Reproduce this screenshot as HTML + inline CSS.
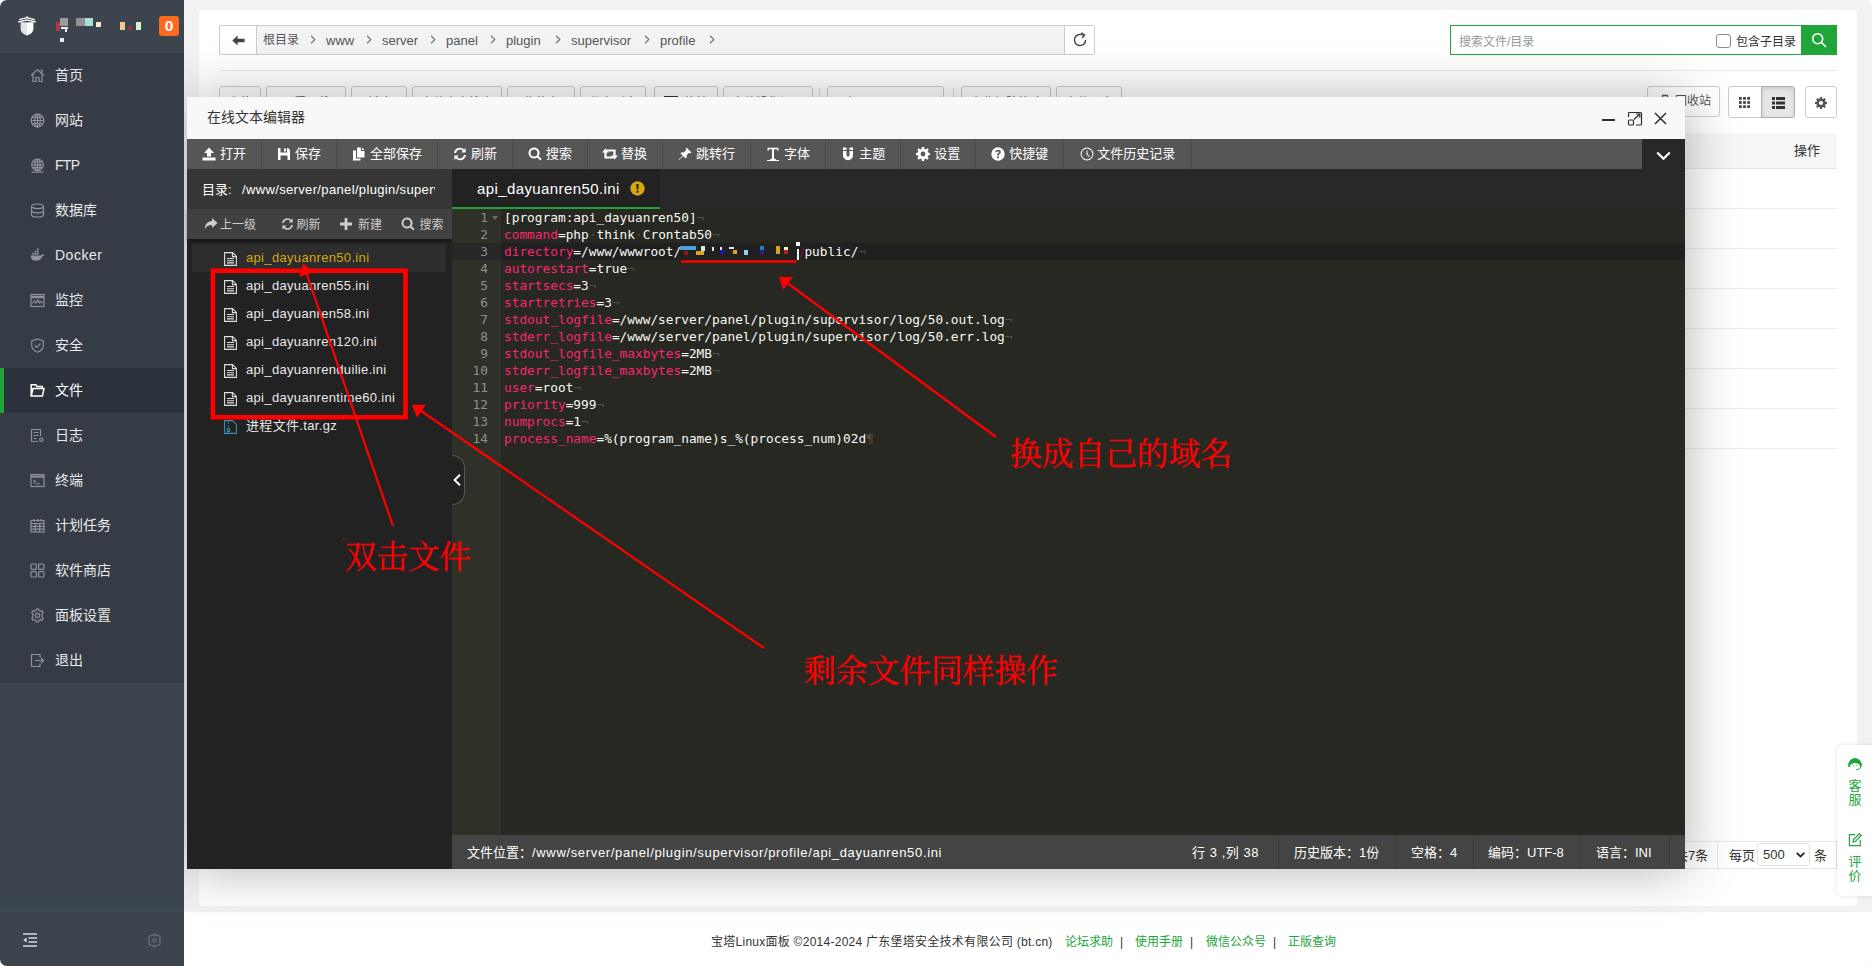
<!DOCTYPE html>
<html lang="zh-CN">
<head>
<meta charset="utf-8">
<title>宝塔Linux面板</title>
<style>
*{box-sizing:border-box;margin:0;padding:0}
html,body{width:1872px;height:966px;overflow:hidden;background:#fff}
body{font-family:"Liberation Sans","Noto Sans CJK SC",sans-serif;font-size:12px;color:#333;position:relative}
.abs{position:absolute}
svg{display:block}
/* ---------- sidebar ---------- */
#side{position:absolute;left:0;top:0;width:184px;height:966px;background:#3c444d;border-radius:7px 0 0 7px;overflow:hidden}
#side .menu{position:absolute;left:0;top:53px;width:184px;height:630px;background:#353c46}
#side .it{position:relative;height:45px;line-height:44px;color:#e9e9e9;font-size:14px;padding-left:55px;white-space:nowrap}
#side .it svg{position:absolute;left:30px;top:15px;width:15px;height:15px;fill:none;stroke:#8d9399;stroke-width:1.2}
#side .it.on{background:#2c323c;color:#fff}
#side .it.on svg{stroke:#fff;stroke-width:1.5}
#side .it.on:before{content:"";position:absolute;left:0;top:0;width:4px;height:45px;background:#20a53a}
#side .sep{position:absolute;left:0;top:911px;width:184px;height:1px;background:#424c58}
#side .badge{position:absolute;left:159px;top:16px;width:20px;height:20px;border-radius:3px;background:#fb6a1f;color:#fff;font-weight:bold;font-size:15.5px;line-height:20px;text-align:center}
#side .mos i{position:absolute;display:block}
/* ---------- main ---------- */
#main{position:absolute;left:184px;top:0;width:1688px;height:966px;background:#f2f2f2;overflow:hidden;border-radius:0 7px 7px 0}
#card{position:absolute;left:15px;top:10px;width:1658px;height:896px;background:#fff;border-radius:4px}
#foot{position:absolute;left:0;top:912px;width:1688px;height:54px;background:#fff;font-size:12px;color:#333;white-space:nowrap}
#foot span{position:absolute;top:22px;line-height:16px}
#foot .g{color:#20a53a}
/* main content (coordinates relative to #main: page x - 184) */
#main .bc{position:absolute;left:35px;top:25px;width:876px;height:30px;border:1px solid #ccc;border-radius:2px;background:#f3f3f3}
#main .bc .back{position:absolute;left:0;top:0;width:37px;height:28px;background:#fff;border-right:1px solid #ccc}
#main .bc .ref{position:absolute;right:0;top:0;width:30px;height:28px;background:#fff;border-left:1px solid #ccc}
#main .bc .p{position:absolute;top:0;line-height:29px;font-size:13px;color:#555;white-space:nowrap}
#main .bc .p.a{color:#888;font-size:12px}
#main .srch{position:absolute;left:1266px;top:25px;width:387px;height:30px;border:1px solid #20a53a;background:#fff}
#main .srch .ph{position:absolute;left:8px;top:0;line-height:32px;font-size:12px;color:#999}
#main .srch .cb{position:absolute;left:265px;top:7.5px;width:14.5px;height:14.5px;border:1px solid #8c8c8c;border-radius:3px;background:#fff}
#main .srch .lb{position:absolute;left:285px;top:0;line-height:32px;font-size:12px;color:#333}
#main .srch .go{position:absolute;right:-1px;top:-1px;width:36px;height:30px;background:#20a53a}
#main .hr{position:absolute;left:35px;top:70px;width:1618px;height:1px;background:#eaeaea}
#main .tb{position:absolute;top:86px;height:31px;border:1px solid #ccc;border-radius:3px;background:#fff}
#main .th{position:absolute;left:35px;top:133px;width:1618px;height:36px;background:#f6f6f6;border-bottom:1px solid #e6e6e6}
#main .th span{position:absolute;left:1575px;top:0;line-height:35px;font-size:13px;color:#333}
#main .rl{position:absolute;left:35px;width:1618px;height:1px;background:#ececec}
#main .pg{position:absolute;top:841px;height:28px;border:1px solid #e6e6e6;background:#fff;font-size:13px;color:#333}
#fl{position:absolute;left:1653px;top:745px;width:40px;height:151px;background:#fff;border-radius:6px;box-shadow:0 0 4px rgba(0,0,0,.12);color:#20a53a;font-size:13px;line-height:14px}
#fl span{position:absolute;left:11px;width:14px;text-align:center}
/* ---------- modal (inside #main; page x-184) ---------- */
#dlg{position:absolute;left:3px;top:97px;width:1498px;height:772px;background:#222;box-shadow:1px 1px 50px rgba(0,0,0,.3)}
#dlg .tt{position:absolute;left:0;top:0;width:1498px;height:42px;background:#f8f8f8;font-size:14px;color:#333;line-height:40px;padding-left:20px}
#dlg .bar{position:absolute;left:0;top:42px;width:1498px;height:30px;background:#565656;white-space:nowrap;font-size:0}
#dlg .bar .b{display:inline-block;vertical-align:top;height:30px;line-height:29px;padding:0 15px 0 33px;border-right:1px solid #4a4a4a;font-size:13px;color:#fff;position:relative}
#dlg .bar .b svg{position:absolute;left:15px;top:8px;width:14px;height:14px;fill:#fff}
#dlg .bar .dd{position:absolute;right:0;top:0;width:43px;height:30px;background:#282828}
#dlg .lp{position:absolute;left:0;top:72px;width:265px;height:700px;background:#222}
#dlg .lp .dir{position:absolute;left:0;top:0;width:265px;height:40px;background:#363636;color:#fff;font-size:12px;line-height:42px;white-space:nowrap;overflow:hidden}
#dlg .lp .ops{position:absolute;left:0;top:40px;width:265px;height:30px;background:#414141;color:#cdcdcd;font-size:12px;line-height:32px;box-shadow:0 2px 3px rgba(0,0,0,.35)}
#dlg .lp .ops span{position:absolute;top:0;white-space:nowrap}
#dlg .lp .ops svg{position:absolute;top:8px;fill:#cdcdcd}
#dlg .f{position:absolute;left:5px;width:254px;height:28px;line-height:28px;font-size:13px;color:#e8e8e8;padding-left:54px;white-space:nowrap;letter-spacing:0.33px}
#dlg .f.on{background:#2d2d2d;color:#d4a80e}
#dlg .f svg{position:absolute;left:32px;top:8px}
#dlg .tabs{position:absolute;left:265px;top:72px;width:1233px;height:40px;background:#282828}
#dlg .tab{position:absolute;left:0;top:0;width:208px;height:40px;background:#222;border-bottom:2px solid #20a53a;color:#fff;font-size:15px;line-height:39px;padding-left:25px;white-space:nowrap;letter-spacing:0.4px}
#dlg .ed{position:absolute;left:265px;top:112px;width:1233px;height:626px;background:#272822;overflow:hidden}
#dlg .gut{position:absolute;left:0;top:0;width:49px;height:626px;background:#2f3129}
#dlg .ln{position:absolute;left:0;width:1233px;height:17px;line-height:17px;font-family:"DejaVu Sans Mono","Liberation Mono",monospace;font-size:12.8px;color:#f8f8f2;white-space:pre}
#dlg .ln b{position:absolute;left:0;top:0;width:36px;text-align:right;font-weight:normal;color:#8f908a}
#dlg .ln s{position:absolute;left:52px;top:0;text-decoration:none}
#dlg .ln k{color:#f92672}
#dlg .ln u{text-decoration:none;color:#52524d}
#dlg .ln.act{background:#202020}
#dlg .ln.act:before{content:"";position:absolute;left:0;top:0;width:49px;height:17px;background:#272727}
#dlg .st{position:absolute;left:265px;top:738px;width:1233px;height:34px;background:#444;color:#fff;font-size:13px;line-height:33px;white-space:nowrap}
#dlg .st span{position:absolute;top:1px}
#dlg .st em{font-style:normal;letter-spacing:0.66px}
#dlg .st i{position:absolute;top:0;width:1px;height:34px;background:#393939}
#dlg .fold{position:absolute;left:265px;top:358px;width:13px;height:50px;background:#222;border:1px solid #585858;border-left:none;border-radius:0 13px 13px 0}
</style>
</head>
<body>
<div id="side">
  <!-- logo -->
  <svg class="abs" style="left:18px;top:16px" width="18" height="20" viewBox="0 0 18 20">
    <path d="M9 0.3 L9 2.2 M1.2 3.6 L9 1.7 L16.8 3.6 M0.3 6 L9 3.8 L17.7 6" stroke="#fff" stroke-width="1.3" fill="none"/>
    <path d="M2.6 6.2 H9 V19.5 C5.5 18.2 2.6 16.2 2.6 12.5 Z" fill="#e4e4e4"/>
    <path d="M9 6.2 H15.4 V12.5 C15.4 16.2 12.5 18.2 9 19.5 Z" fill="#fff"/>
  </svg>
  <div class="mos">
    <i style="left:56px;top:22px;width:4px;height:9px;background:#a83a45"></i>
    <i style="left:60px;top:18px;width:8px;height:8px;background:#9b9b9b"></i>
    <i style="left:76px;top:18px;width:9px;height:8px;background:#8f9396"></i>
    <i style="left:85px;top:18px;width:8px;height:8px;background:#a8e0cf"></i>
    <i style="left:96px;top:22px;width:5px;height:5px;background:#f3ecc3"></i>
    <i style="left:120px;top:22px;width:5px;height:8px;background:#f6c48f"></i>
    <i style="left:128px;top:26px;width:4px;height:4px;background:#8e3340"></i>
    <i style="left:136px;top:22px;width:5px;height:8px;background:#d9f0d0"></i>
    <i style="left:60px;top:38px;width:4px;height:4px;background:#e9edf0"></i>
    <i style="left:61px;top:27px;width:7px;height:2px;background:#f4f6fa"></i><i style="left:65px;top:27px;width:2px;height:5px;background:#e8ecf4"></i>
  </div>
  <div class="badge">0</div>
  <div class="menu">
    <div class="it"><svg viewBox="0 0 15 15"><path d="M1 7.5 L7.5 1.5 L14 7.5 M3 6 V13.5 H6 V9.5 H9 V13.5 H12 V6 M10.5 2 H12 V4.5"/></svg>首页</div>
    <div class="it"><svg viewBox="0 0 15 15"><circle cx="7.5" cy="7.5" r="6.3"/><ellipse cx="7.5" cy="7.5" rx="2.8" ry="6.3"/><path d="M7.5 1.2 V13.8 M1.2 7.5 H13.8 M2 4.5 H13 M2 10.5 H13"/></svg>网站</div>
    <div class="it"><svg viewBox="0 0 15 15"><circle cx="7.5" cy="6.8" r="5.8"/><ellipse cx="7.5" cy="6.8" rx="2.6" ry="5.8"/><path d="M7.5 1 V12.6 M1.7 6.8 H13.3 M2.4 4 H12.6 M2.4 9.6 H12.6 M1.5 14.2 H13.5"/></svg><span style="letter-spacing:-0.7px">FTP</span></div>
    <div class="it"><svg viewBox="0 0 15 15"><ellipse cx="7.5" cy="3.3" rx="6" ry="2.3"/><path d="M1.5 3.3 V11.7 C1.5 13 4.2 14 7.5 14 S13.5 13 13.5 11.7 V3.3 M1.5 7.5 C1.5 8.8 4.2 9.8 7.5 9.8 S13.5 8.8 13.5 7.5"/></svg>数据库</div>
    <div class="it"><svg viewBox="0 0 15 15" style="fill:#8d9399;stroke:none"><path d="M0.6 7.4 H11.2 C11.6 6.6 12.1 6.2 13 6.4 C13.6 6.5 14.2 6.8 14.5 7.2 C13.9 8 13.1 8.3 12.3 8.3 C11.3 11.3 9 12.8 5.6 12.8 C2.6 12.8 0.8 11 0.6 7.4 Z M2.2 5 H4 V6.8 H2.2 Z M4.5 5 H6.3 V6.8 H4.5 Z M6.8 5 H8.6 V6.8 H6.8 Z M4.5 2.7 H6.3 V4.5 H4.5 Z M6.8 2.7 H8.6 V4.5 H6.8 Z M6.8 0.6 H8.6 V2.3 H6.8 Z"/></svg><span style="letter-spacing:0.5px">Docker</span></div>
    <div class="it"><svg viewBox="0 0 15 15"><rect x="1" y="1.5" width="13" height="12"/><path d="M1 4 H14" stroke-width="2.4"/><path d="M2.5 10.5 L4.5 8 L6 10 L8 7 L9.5 10 L11 8.5 L12.5 10"/></svg>监控</div>
    <div class="it"><svg viewBox="0 0 15 15"><path d="M7.5 1 L13.3 3 V7.5 C13.3 10.8 10.8 13 7.5 14.2 C4.2 13 1.7 10.8 1.7 7.5 V3 Z M4.8 7.4 L6.8 9.4 L10.4 5.6"/></svg>安全</div>
    <div class="it on"><svg viewBox="0 0 15 15"><path d="M1.2 13 V1.8 H5.8 L7 3.6 H12.2 V5.6 M1.2 13 L3 5.6 H14 L12.4 13 Z"/></svg>文件</div>
    <div class="it"><svg viewBox="0 0 15 15"><path d="M10.5 8 V1.5 H1.5 V13.5 H8 M3.5 4.5 H8.5 M3.5 7.5 H8.5 M3.5 10.5 H6.5"/><circle cx="11.3" cy="11.8" r="1.7"/></svg>日志</div>
    <div class="it"><svg viewBox="0 0 15 15"><rect x="1" y="1.5" width="13" height="12"/><path d="M1 3.6 H14" stroke-width="2.2"/><path d="M3.5 7 L5.5 8.7 L3.5 10.4 M6.5 10.8 H9.5"/></svg>终端</div>
    <div class="it"><svg viewBox="0 0 15 15"><rect x="1" y="2.5" width="13" height="11.5"/><path d="M1 5.5 H14 M1 8.3 H14 M1 11.1 H14 M5.3 5.5 V14 M9.7 5.5 V14 M4 1 V3.5 M7.5 1 V3.5 M11 1 V3.5"/></svg>计划任务</div>
    <div class="it"><svg viewBox="0 0 15 15"><rect x="1" y="1" width="5.4" height="5.4" rx="1"/><rect x="8.6" y="1" width="5.4" height="5.4" rx="1"/><rect x="1" y="8.6" width="5.4" height="5.4" rx="1"/><rect x="8.6" y="8.6" width="5.4" height="5.4" rx="1"/></svg>软件商店</div>
    <div class="it"><svg viewBox="0 0 15 15"><circle cx="7.5" cy="7.5" r="2.1"/><path d="M6.4 1 H8.6 L9 2.7 L10.3 3.4 L12 2.8 L13.2 4.7 L12 6 V7.5 9 L13.2 10.3 L12 12.2 L10.3 11.6 L9 12.3 L8.6 14 H6.4 L6 12.3 L4.7 11.6 L3 12.2 L1.8 10.3 L3 9 V6 L1.8 4.7 L3 2.8 L4.7 3.4 L6 2.7 Z"/></svg>面板设置</div>
    <div class="it"><svg viewBox="0 0 15 15"><path d="M10 4.5 V1.5 H1.5 V13.5 H10 V10.5 M5 7.5 H13.5 M11 5 L13.5 7.5 L11 10"/></svg>退出</div>
  </div>
  <div class="sep"></div>
  <svg class="abs" style="left:23px;top:933px" width="15" height="14" viewBox="0 0 15 14"><path d="M0 1 H14 M5.5 5 H14 M5.5 9 H14 M0 13 H14" stroke="#d6d8da" stroke-width="1.5" fill="none"/><path d="M3.6 4.4 V9.6 L0.2 7 Z" fill="#d6d8da"/></svg>
  <svg class="abs" style="left:146.5px;top:932.5px" width="15" height="15" viewBox="0 0 15 15" fill="none" stroke="#6d757e" stroke-width="1.1" stroke-linejoin="round"><circle cx="7.5" cy="7.5" r="1.8"/><path d="M7.5 0.9 Q8.6 2.6 10.3 2.7 Q12.4 2.4 13.2 4.2 Q12.3 6 13.1 7.5 Q12.3 9 13.2 10.8 Q12.4 12.6 10.3 12.3 Q8.6 12.4 7.5 14.1 Q6.4 12.4 4.7 12.3 Q2.6 12.6 1.8 10.8 Q2.7 9 1.9 7.5 Q2.7 6 1.8 4.2 Q2.6 2.4 4.7 2.7 Q6.4 2.6 7.5 0.9 Z"/></svg>
</div>
<div id="main">
  <div id="card"></div>
  <div class="bc">
    <div class="back"><svg class="abs" style="left:12px;top:9px" width="13" height="11" viewBox="0 0 13 11"><path d="M0.3 5.5 L5.6 0.6 V3.7 H12.6 V7.3 H5.6 V10.4 Z" fill="#444"/></svg></div>
    <span class="p" style="left:43px;font-size:12px">根目录</span><svg class="abs" style="left:89.5px;top:9px" width="6" height="9" viewBox="0 0 6 9" fill="none" stroke="#777" stroke-width="1.2"><path d="M1 0.8 L4.8 4.5 L1 8.2"/></svg>
    <span class="p" style="left:106px">www</span><svg class="abs" style="left:146.0px;top:9px" width="6" height="9" viewBox="0 0 6 9" fill="none" stroke="#777" stroke-width="1.2"><path d="M1 0.8 L4.8 4.5 L1 8.2"/></svg>
    <span class="p" style="left:162px">server</span><svg class="abs" style="left:210.0px;top:9px" width="6" height="9" viewBox="0 0 6 9" fill="none" stroke="#777" stroke-width="1.2"><path d="M1 0.8 L4.8 4.5 L1 8.2"/></svg>
    <span class="p" style="left:226px">panel</span><svg class="abs" style="left:270.0px;top:9px" width="6" height="9" viewBox="0 0 6 9" fill="none" stroke="#777" stroke-width="1.2"><path d="M1 0.8 L4.8 4.5 L1 8.2"/></svg>
    <span class="p" style="left:286px">plugin</span><svg class="abs" style="left:334.5px;top:9px" width="6" height="9" viewBox="0 0 6 9" fill="none" stroke="#777" stroke-width="1.2"><path d="M1 0.8 L4.8 4.5 L1 8.2"/></svg>
    <span class="p" style="left:351px">supervisor</span><svg class="abs" style="left:424.0px;top:9px" width="6" height="9" viewBox="0 0 6 9" fill="none" stroke="#777" stroke-width="1.2"><path d="M1 0.8 L4.8 4.5 L1 8.2"/></svg>
    <span class="p" style="left:440px">profile</span><svg class="abs" style="left:489.0px;top:9px" width="6" height="9" viewBox="0 0 6 9" fill="none" stroke="#777" stroke-width="1.2"><path d="M1 0.8 L4.8 4.5 L1 8.2"/></svg>
    <div class="ref"><svg class="abs" style="left:7px;top:6px" width="16" height="16" viewBox="0 0 16 16" fill="none" stroke="#444" stroke-width="1.4"><path d="M13.6 8 A5.6 5.6 0 1 1 10.8 3.15"/><path d="M9.3 0.8 L12.6 3 L10.2 6" stroke-linejoin="miter"/></svg></div>
  </div>
  <div class="srch">
    <span class="ph">搜索文件/目录</span>
    <div class="cb"></div><span class="lb">包含子目录</span>
    <div class="go"><svg class="abs" style="left:10px;top:7px" width="16" height="16" viewBox="0 0 16 16" fill="none" stroke="#fff" stroke-width="1.6"><circle cx="6.7" cy="6.7" r="5"/><path d="M10.4 10.4 L15 15"/></svg></div>
  </div>
  <div class="hr"></div>
  <!-- file toolbar (mostly hidden by dialog) -->
  <div class="tb" style="left:35px;width:42px"><span style="display:block;text-align:center;line-height:33px;white-space:nowrap;color:#555">上传</span></div>
  <div class="tb" style="left:82px;width:80px"><span style="display:block;text-align:center;line-height:33px;white-space:nowrap;color:#555">远程下载</span></div>
  <div class="tb" style="left:167px;width:56px"><span style="display:block;text-align:center;line-height:33px;white-space:nowrap;color:#555">新建</span></div>
  <div class="tb" style="left:228px;width:90px"><span style="display:block;text-align:center;line-height:33px;white-space:nowrap;color:#555">文件内容搜索</span></div>
  <div class="tb" style="left:323px;width:68px"><span style="display:block;text-align:center;line-height:33px;white-space:nowrap;color:#555">收藏夹</span></div>
  <div class="tb" style="left:396px;width:66px"><span style="display:block;text-align:center;line-height:33px;white-space:nowrap;color:#555">分享列表</span></div>
  <div class="tb" style="left:470px;width:64px"><svg class="abs" style="left:9px;top:9px" width="14" height="12" viewBox="0 0 14 12"><rect x="0" y="0" width="14" height="12" fill="#333"/></svg><span class="abs" style="left:29px;top:0;line-height:33px;white-space:nowrap;color:#555">终端</span></div>
  <div class="tb" style="left:539px;width:90px"><span style="display:block;text-align:center;line-height:33px;white-space:nowrap;color:#555">文件操作记录</span></div>
  <div class="tb" style="left:643px;width:117px"><span style="display:block;text-align:center;line-height:33px;white-space:nowrap;color:#555">/(根目录) 36.9GB</span></div>
  <div class="tb" style="left:777px;width:90px"><span style="display:block;text-align:center;line-height:33px;white-space:nowrap;color:#555">企业级防篡改</span></div>
  <div class="tb" style="left:872px;width:66px"><span style="display:block;text-align:center;line-height:33px;white-space:nowrap;color:#555">文件同步</span></div>
  <div class="abs" style="left:634.5px;top:88px;width:1px;height:26px;background:#ddd"></div><div class="abs" style="left:768.5px;top:88px;width:1px;height:26px;background:#ddd"></div>
  <div class="tb" style="left:1463px;width:73px;top:86px;height:31px"><span class="abs" style="left:27px;top:0;line-height:28px;font-size:12px;color:#555;white-space:nowrap">回收站</span>
    <svg class="abs" style="left:10px;top:7px" width="14" height="16" viewBox="0 0 14 16" fill="none" stroke="#555" stroke-width="1.3"><path d="M1 4 H13 M4.5 4 V1.5 H9.5 V4 M2.5 4 L3.2 15 H10.8 L11.5 4"/></svg></div>
  <div class="tb" style="left:1544px;width:34px;height:32px;border-radius:3px 0 0 3px"><svg class="abs" style="left:10px;top:10px" width="11" height="11" viewBox="0 0 12 12" fill="#444"><rect x="0" y="0" width="3" height="3"/><rect x="4.5" y="0" width="3" height="3"/><rect x="9" y="0" width="3" height="3"/><rect x="0" y="4.5" width="3" height="3"/><rect x="4.5" y="4.5" width="3" height="3"/><rect x="9" y="4.5" width="3" height="3"/><rect x="0" y="9" width="3" height="3"/><rect x="4.5" y="9" width="3" height="3"/><rect x="9" y="9" width="3" height="3"/></svg></div>
  <div class="tb" style="left:1577px;width:34px;height:32px;border-radius:0 3px 3px 0;background:#e6e6e6;border-color:#adadad;box-shadow:inset 0 2px 4px rgba(0,0,0,.12)"><svg class="abs" style="left:10px;top:10px" width="13" height="12" viewBox="0 0 13 12" fill="#333"><rect x="0" y="0" width="3" height="3"/><rect x="4" y="0" width="9" height="3"/><rect x="0" y="4.5" width="3" height="3"/><rect x="4" y="4.5" width="9" height="3"/><rect x="0" y="9" width="3" height="3"/><rect x="4" y="9" width="9" height="3"/></svg></div>
  <div class="tb" style="left:1621px;width:32px;height:32px"><svg class="abs" style="left:9px;top:10px" width="12" height="12" viewBox="0 0 14 14"><path fill="#555" fill-rule="evenodd" d="M5.9 0 H8.1 L8.5 1.9 L9.6 2.4 L11.2 1.3 L12.7 2.8 L11.6 4.4 L12.1 5.5 L14 5.9 V8.1 L12.1 8.5 L11.6 9.6 L12.7 11.2 L11.2 12.7 L9.6 11.6 L8.5 12.1 L8.1 14 H5.9 L5.5 12.1 L4.4 11.6 L2.8 12.7 L1.3 11.2 L2.4 9.6 L1.9 8.5 L0 8.1 V5.9 L1.9 5.5 L2.4 4.4 L1.3 2.8 L2.8 1.3 L4.4 2.4 L5.5 1.9 Z M7 4.6 A2.4 2.4 0 1 0 7 9.4 A2.4 2.4 0 1 0 7 4.6 Z"/></svg></div>
  <div class="th"><span>操作</span></div>
  <div class="rl" style="top:208px"></div><div class="rl" style="top:248px"></div><div class="rl" style="top:288px"></div>
  <div class="rl" style="top:328px"></div><div class="rl" style="top:368px"></div><div class="rl" style="top:408px"></div><div class="rl" style="top:448px"></div>
  <!-- pagination -->
  <div class="pg" style="left:1440px;width:94px"><span class="abs" style="left:50px;top:0;line-height:27px;white-space:nowrap">共7条</span></div>
  <div class="pg" style="left:1533px;width:120px">
    <span class="abs" style="left:11px;top:0;line-height:27px">每页</span>
    <div class="abs" style="left:39px;top:1px;width:53px;height:23px;border:1px solid #e2e2e2;border-radius:3px;background:#fff">
      <span class="abs" style="left:5px;top:0;line-height:22px;font-size:13px;color:#333">500</span>
      <svg class="abs" style="left:38px;top:8px" width="9" height="6" viewBox="0 0 9 6" fill="none" stroke="#222" stroke-width="1.8"><path d="M0.7 0.8 L4.5 4.6 L8.3 0.8"/></svg>
    </div>
    <span class="abs" style="left:96px;top:0;line-height:27px">条</span>
  </div>
  <div id="foot">
    <span style="left:527px;letter-spacing:0.26px">宝塔Linux面板 ©2014-2024 广东堡塔安全技术有限公司 (bt.cn)</span>
    <span class="g" style="left:881px">论坛求助</span><span style="left:936px">|</span>
    <span class="g" style="left:951px">使用手册</span><span style="left:1006px">|</span>
    <span class="g" style="left:1022px">微信公众号</span><span style="left:1089px">|</span>
    <span class="g" style="left:1104px">正版查询</span>
  </div>
  <div id="fl">
    <svg class="abs" style="left:11px;top:13px" width="14" height="13" viewBox="0 0 14 13"><path d="M1.2 6.5 V5.8 A5.8 5.2 0 0 1 12.8 5.8 V6.5" fill="#20a53a" stroke="#20a53a" stroke-width="1"/><rect x="0.2" y="5" width="2.2" height="4" rx="1" fill="#20a53a"/><rect x="11.6" y="5" width="2.2" height="4" rx="1" fill="#20a53a"/><path d="M3.2 6.2 Q7 3.8 10.8 6.2 V7.5 A3.8 3.8 0 0 1 3.2 7.5 Z" fill="#fff"/><path d="M12.6 8.8 Q12.4 11.6 8 11.8" stroke="#20a53a" fill="none" stroke-width="0.9"/><circle cx="5.6" cy="7.6" r=".5" fill="#20a53a"/><circle cx="8.4" cy="7.6" r=".5" fill="#20a53a"/></svg>
    <span style="top:34px">客</span><span style="top:48px">服</span>
    <svg class="abs" style="left:11px;top:88px" width="14" height="14" viewBox="0 0 14 14" fill="none" stroke="#20a53a" stroke-width="1.2"><path d="M12.3 6.8 V12.6 H1.4 V1.7 H7.2"/><path d="M5 9 L5.5 6.6 L11.4 0.8 L13.2 2.6 L7.4 8.5 Z"/></svg>
    <span style="top:110px">评</span><span style="top:124px">价</span>
  </div>
  <div id="dlg">
    <div class="tt">在线文本编辑器
      <svg class="abs" style="left:1415px;top:14px" width="66" height="16" viewBox="0 0 66 16" fill="none" stroke="#2e2e2e" stroke-width="1.6">
        <path d="M0 9 H13" stroke-width="2"/>
        <path d="M26.5 6 V2.5 Q26.5 1.5 27.5 1.5 H38.5 Q39.5 1.5 39.5 2.5 V13 Q39.5 14 38.5 14 H34" stroke-width="1.2"/><rect x="26.5" y="9" width="5" height="5" rx="1" stroke-width="1.2"/><path d="M32 8.5 L37.5 3.2 M34 3 H37.8 V6.8" stroke-width="1.2"/>
        <path d="M53 2 L64 13 M64 2 L53 13" stroke-width="1.5"/>
      </svg>
    </div>
    <div class="bar">
      <span class="b"><svg viewBox="0 0 14 14"><path d="M7 0.5 L12 6 H9 V9.5 H5 V6 H2 Z M0.5 10.5 H13.5 V13.5 H0.5 Z"/></svg>打开</span><span class="b"><svg viewBox="0 0 14 14"><path d="M1 1 H3.5 V5.5 H10 V1 H11 L13 3 V13 H1 Z M7 1.5 H9 V4.5 H7 Z M3.5 8.5 V13 H10.5 V8.5 Z" fill-rule="evenodd"/></svg>保存</span><span class="b"><svg viewBox="0 0 14 14"><path d="M5 0.5 H9 V4 H12.5 V10.5 H5 Z M10 0.5 L12.5 3 H10 Z M1 3.5 H4 V11.5 H8.5 V13.5 H1 Z"/></svg>全部保存</span><span class="b"><svg viewBox="0 0 14 14"><path d="M12.6 1 V5.4 H8.2 L9.9 3.7 A4.1 4.1 0 0 0 3 6 H1.1 A6 6 0 0 1 11.2 2.4 Z M1.4 13 V8.6 H5.8 L4.1 10.3 A4.1 4.1 0 0 0 11 8 H12.9 A6 6 0 0 1 2.8 11.6 Z"/></svg>刷新</span><span class="b"><svg viewBox="0 0 14 14"><path d="M6 0.5 A5.5 5.5 0 1 0 9.2 10.5 L12.2 13.5 L13.6 12.1 L10.6 9.1 A5.5 5.5 0 0 0 6 0.5 Z M6 2.5 A3.5 3.5 0 1 1 6 9.5 A3.5 3.5 0 1 1 6 2.5 Z" fill-rule="evenodd"/></svg>搜索</span><span class="b"><svg viewBox="0 0 16 14" style="width:16px;left:14px"><path d="M3.5 1.5 L7 5.5 H4.6 V9.4 H9.6 L11.4 11.6 H2.4 V5.5 H0 Z M12.5 12.5 L9 8.5 H11.4 V4.6 H6.4 L4.6 2.4 H13.6 V8.5 H16 Z"/></svg>替换</span><span class="b"><svg viewBox="0 0 14 14"><path d="M8.5 0.5 L13.5 5.5 L12.3 6.2 L11 5.8 L8.6 8.2 C9 9.6 8.6 10.8 7.8 11.6 L5.1 8.9 L1 13 L0.6 13 V12.6 L4.7 8.5 L2.4 6.2 C3.2 5.4 4.4 5 5.8 5.4 L8.2 3 L7.8 1.7 Z"/></svg>跳转行</span><span class="b"><svg viewBox="0 0 14 14"><path d="M1.5 0.8 H12.5 V3.8 H11.5 L11 2.3 H8 V11.5 L9.8 12 V13 H4.2 V12 L6 11.5 V2.3 H3 L2.5 3.8 H1.5 Z M1 13 H13 V13.9 H1 Z"/></svg>字体</span><span class="b"><svg viewBox="0 0 14 14"><path d="M2 0.5 H5.5 V3 H2 Z M8.5 0.5 H12 V3 H8.5 Z M2 4 H5.5 V8 A1.5 1.5 0 0 0 8.5 8 V4 H12 V8.2 A5 5 0 0 1 2 8.2 Z"/></svg>主题</span><span class="b"><svg viewBox="0 0 14 14"><path fill-rule="evenodd" d="M5.9 0 H8.1 L8.5 1.9 L9.6 2.4 L11.2 1.3 L12.7 2.8 L11.6 4.4 L12.1 5.5 L14 5.9 V8.1 L12.1 8.5 L11.6 9.6 L12.7 11.2 L11.2 12.7 L9.6 11.6 L8.5 12.1 L8.1 14 H5.9 L5.5 12.1 L4.4 11.6 L2.8 12.7 L1.3 11.2 L2.4 9.6 L1.9 8.5 L0 8.1 V5.9 L1.9 5.5 L2.4 4.4 L1.3 2.8 L2.8 1.3 L4.4 2.4 L5.5 1.9 Z M7 4.6 A2.4 2.4 0 1 0 7 9.4 A2.4 2.4 0 1 0 7 4.6 Z"/></svg>设置</span><span class="b"><svg viewBox="0 0 14 14"><path fill-rule="evenodd" d="M7 0.3 A6.7 6.7 0 1 0 7 13.7 A6.7 6.7 0 1 0 7 0.3 Z M6 9.5 H8 V11.3 H6 Z M4.3 5.2 C4.4 3.6 5.5 2.7 7.1 2.7 C8.7 2.7 9.8 3.6 9.8 4.9 C9.8 6 9.2 6.5 8.5 7 C8 7.4 7.9 7.7 7.9 8.5 H6.1 C6.1 7.3 6.4 6.8 7.1 6.3 C7.6 5.9 7.9 5.6 7.9 5.1 C7.9 4.6 7.6 4.3 7.1 4.3 C6.5 4.3 6.2 4.7 6.1 5.3 Z"/></svg>快捷键</span><span class="b" style="padding-left:33px;padding-right:15.5px"><svg viewBox="0 0 14 14" style="left:16px"><path fill-rule="evenodd" d="M7 0.6 A6.4 6.4 0 1 0 7 13.4 A6.4 6.4 0 1 0 7 0.6 Z M7 1.6 A5.4 5.4 0 1 1 7 12.4 A5.4 5.4 0 1 1 7 1.6 Z M6.5 3.5 H7.5 V7 L9.8 9.2 L9.1 9.9 L6.5 7.4 Z"/></svg>文件历史记录</span>
      <div class="dd"><svg class="abs" style="left:14px;top:12px" width="15" height="10" viewBox="0 0 15 10" fill="none" stroke="#fff" stroke-width="2.2"><path d="M1.2 1.5 L7.5 7.8 L13.8 1.5"/></svg></div>
    </div>
    <div class="lp">
      <div class="dir"><span class="abs" style="left:15px;font-size:13px">目录:</span><span class="abs" style="left:55px;font-size:13px;letter-spacing:0.35px">/www/server/panel/plugin/supervisor/profile</span><div class="abs" style="left:248px;top:0;width:17px;height:40px;background:#363636"></div></div>
      <div class="ops">
        <svg style="left:17px" width="14" height="14" viewBox="0 0 14 14"><path d="M8 1 L13.5 6 L8 11 V8 C4.5 8 2.2 9.2 0.8 12.4 C0.8 7.5 3.5 4.4 8 4 Z"/></svg><span style="left:33px">上一级</span>
        <svg style="left:94px" width="13" height="14" viewBox="0 0 14 14"><path d="M12.6 1 V5.4 H8.2 L9.9 3.7 A4.1 4.1 0 0 0 3 6 H1.1 A6 6 0 0 1 11.2 2.4 Z M1.4 13 V8.6 H5.8 L4.1 10.3 A4.1 4.1 0 0 0 11 8 H12.9 A6 6 0 0 1 2.8 11.6 Z"/></svg><span style="left:109.5px">刷新</span>
        <svg style="left:153px;top:9px" width="12" height="12" viewBox="0 0 12 12"><path d="M4.6 0 H7.4 V4.6 H12 V7.4 H7.4 V12 H4.6 V7.4 H0 V4.6 H4.6 Z"/></svg><span style="left:171px">新建</span>
        <svg style="left:214px" width="14" height="14" viewBox="0 0 14 14"><path d="M6 0.5 A5.5 5.5 0 1 0 9.2 10.5 L12.2 13.5 L13.6 12.1 L10.6 9.1 A5.5 5.5 0 0 0 6 0.5 Z M6 2.5 A3.5 3.5 0 1 1 6 9.5 A3.5 3.5 0 1 1 6 2.5 Z" fill-rule="evenodd"/></svg><span style="left:232.5px">搜索</span>
      </div>
      <div class="f on" style="top:75px"><svg width="13" height="14" viewBox="0 0 13 14" fill="none" stroke="#e0e0e0" stroke-width="1.1"><path d="M0.6 0.6 H8.6 L12.4 4.4 V13.4 H0.6 Z M8.4 0.8 V4.6 H12.2 M3 6.5 H10 M3 8.7 H10 M3 10.9 H10"/></svg>api_dayuanren50.ini</div>
      <div class="f" style="top:103px"><svg width="13" height="14" viewBox="0 0 13 14" fill="none" stroke="#e0e0e0" stroke-width="1.1"><path d="M0.6 0.6 H8.6 L12.4 4.4 V13.4 H0.6 Z M8.4 0.8 V4.6 H12.2 M3 6.5 H10 M3 8.7 H10 M3 10.9 H10"/></svg>api_dayuanren55.ini</div>
      <div class="f" style="top:131px"><svg width="13" height="14" viewBox="0 0 13 14" fill="none" stroke="#e0e0e0" stroke-width="1.1"><path d="M0.6 0.6 H8.6 L12.4 4.4 V13.4 H0.6 Z M8.4 0.8 V4.6 H12.2 M3 6.5 H10 M3 8.7 H10 M3 10.9 H10"/></svg>api_dayuanren58.ini</div>
      <div class="f" style="top:159px"><svg width="13" height="14" viewBox="0 0 13 14" fill="none" stroke="#e0e0e0" stroke-width="1.1"><path d="M0.6 0.6 H8.6 L12.4 4.4 V13.4 H0.6 Z M8.4 0.8 V4.6 H12.2 M3 6.5 H10 M3 8.7 H10 M3 10.9 H10"/></svg>api_dayuanren120.ini</div>
      <div class="f" style="top:187px"><svg width="13" height="14" viewBox="0 0 13 14" fill="none" stroke="#e0e0e0" stroke-width="1.1"><path d="M0.6 0.6 H8.6 L12.4 4.4 V13.4 H0.6 Z M8.4 0.8 V4.6 H12.2 M3 6.5 H10 M3 8.7 H10 M3 10.9 H10"/></svg>api_dayuanrenduilie.ini</div>
      <div class="f" style="top:215px"><svg width="13" height="14" viewBox="0 0 13 14" fill="none" stroke="#e0e0e0" stroke-width="1.1"><path d="M0.6 0.6 H8.6 L12.4 4.4 V13.4 H0.6 Z M8.4 0.8 V4.6 H12.2 M3 6.5 H10 M3 8.7 H10 M3 10.9 H10"/></svg>api_dayuanrentime60.ini</div>
      <div class="f" style="top:243px"><svg width="13" height="14" viewBox="0 0 13 14" fill="none" stroke="#3d8eb3" stroke-width="1.1"><path d="M0.6 0.6 H8.6 L12.4 4.4 V13.4 H0.6 Z M4.5 1 V2 M4.5 3 V4 M4.5 5 V6 M4.5 7 V8"/><rect x="3.3" y="9" width="2.4" height="2.6"/></svg>进程文件.tar.gz</div>
    </div>
    <div class="tabs"><div class="tab">api_dayuanren50.ini
      <svg class="abs" style="left:178px;top:12px" width="15" height="15" viewBox="0 0 15 15"><circle cx="7.5" cy="7.5" r="7.2" fill="#d4a80e"/><path d="M6.3 3 H8.7 L8.3 8.6 H6.7 Z M6.5 9.8 H8.5 V11.8 H6.5 Z" fill="#222"/></svg></div></div>
    <div class="ed"><div class="gut"></div>
<div class="ln" style="top:0"><b>1</b><s>[program:api_dayuanren50]<u>¬</u></s><svg class="abs" style="left:40px;top:7px" width="6" height="4" viewBox="0 0 6 4"><path d="M0 0 H6 L3 4 Z" fill="#6b6c66"/></svg></div>
<div class="ln" style="top:17px"><b>2</b><s><k>command</k>=php<u>·</u>think<u>·</u>Crontab50<u>¬</u></s></div>
<div class="ln act" style="top:34px"><b>3</b><s><k>directory</k>=/www/wwwroot/<span style="display:inline-block;width:123.2px"></span>public/<u>¬</u></s></div>
<div class="ln" style="top:51px"><b>4</b><s><k>autorestart</k>=true<u>¬</u></s></div>
<div class="ln" style="top:68px"><b>5</b><s><k>startsecs</k>=3<u>¬</u></s></div>
<div class="ln" style="top:85px"><b>6</b><s><k>startretries</k>=3<u>¬</u></s></div>
<div class="ln" style="top:102px"><b>7</b><s><k>stdout_logfile</k>=/www/server/panel/plugin/supervisor/log/50.out.log<u>¬</u></s></div>
<div class="ln" style="top:119px"><b>8</b><s><k>stderr_logfile</k>=/www/server/panel/plugin/supervisor/log/50.err.log<u>¬</u></s></div>
<div class="ln" style="top:136px"><b>9</b><s><k>stdout_logfile_maxbytes</k>=2MB<u>¬</u></s></div>
<div class="ln" style="top:153px"><b>10</b><s><k>stderr_logfile_maxbytes</k>=2MB<u>¬</u></s></div>
<div class="ln" style="top:170px"><b>11</b><s><k>user</k>=root<u>¬</u></s></div>
<div class="ln" style="top:187px"><b>12</b><s><k>priority</k>=999<u>¬</u></s></div>
<div class="ln" style="top:204px"><b>13</b><s><k>numprocs</k>=1<u>¬</u></s></div>
<div class="ln" style="top:221px"><b>14</b><s><k>process_name</k>=%(program_name)s_%(process_num)02d<u>¶</u></s></div>
    </div>
    <div class="fold"><svg class="abs" style="left:1px;top:18px" width="8" height="12" viewBox="0 0 8 12" fill="none" stroke="#fff" stroke-width="1.9"><path d="M7 0.8 L1.6 6 L7 11.2"/></svg></div>
    <div class="st">
      <span style="left:15px">文件位置：<em>/www/server/panel/plugin/supervisor/profile/api_dayuanren50.ini</em></span>
      <span style="left:740px;letter-spacing:0.55px">行 3 ,列 38</span><i style="left:826px"></i>
      <span style="left:842px">历史版本：1份</span><i style="left:943px"></i>
      <span style="left:959px">空格：4</span><i style="left:1021px"></i>
      <span style="left:1036px">编码：UTF-8</span><i style="left:1128px"></i>
      <span style="left:1144px">语言：INI</span><i style="left:1217px"></i>
    </div>
  </div>
</div><!-- /main -->
<!-- red annotations + mosaics (page coordinates) -->
<svg class="abs" style="left:0;top:0;pointer-events:none" width="1872" height="966" viewBox="0 0 1872 966">
  <!-- domain mosaic -->
  <g shape-rendering="crispEdges">
    <rect x="680" y="246" width="16" height="4" fill="#49a6de"/>
    <rect x="684" y="251" width="4" height="4" fill="#8a1c1c"/>
    <rect x="701" y="246" width="4" height="5" fill="#c8f0e0"/>
    <rect x="696" y="251" width="8" height="4" fill="#e0a020"/>
    <rect x="712" y="247" width="2" height="4" fill="#dfe6ee"/>
    <rect x="720" y="247" width="2" height="3" fill="#dfe6ee"/>
    <rect x="720" y="250" width="5" height="4" fill="#1a1aa0"/>
    <rect x="729" y="247" width="5" height="2" fill="#dfe6ee"/>
    <rect x="733" y="250" width="4" height="4" fill="#d8a020"/>
    <rect x="744" y="250" width="4" height="5" fill="#8fd0f8"/>
    <rect x="760" y="246" width="4" height="4" fill="#2878c8"/>
    <rect x="760" y="250" width="4" height="4" fill="#20208a"/>
    <rect x="776" y="246" width="4" height="8" fill="#d8a020"/>
    <rect x="784" y="247" width="4" height="3" fill="#f0f0c8"/>
    <rect x="784" y="250" width="4" height="4" fill="#b02020"/>
    <rect x="796" y="242" width="4" height="4" fill="#f4f4f4"/>
    <rect x="797" y="249" width="2" height="11" fill="#f4f4f4"/>
  </g>
  <g stroke="#fe0000" fill="none">
    <rect x="212.9" y="270.8" width="192.6" height="146.4" stroke-width="4.6"/>
    <path d="M681 261.5 H796.5" stroke-width="2.6"/>
    <path d="M393 526 L306 272" stroke-width="2.2"/>
    <path d="M764 648 L419 409.5" stroke-width="2.2"/>
    <path d="M996 437 L786 282" stroke-width="2.2"/>
  </g>
  <g fill="#fe0000">
    <path d="M303 263.5 L314.1 271.9 L299.3 276.9 Z"/>
    <path d="M412 404.8 L426 404.8 L417 417.7 Z"/>
    <path d="M779 276.9 L793 276.9 L783.3 289.8 Z"/>
  </g>
  <rect x="343" y="538" width="1.5" height="1.5" fill="#fe0000"/>
  <path d="M800.5 258 L803.5 247" stroke="#7a1414" stroke-width="1.2" fill="none"/>
  <g fill="#fe0000" stroke="#fe0000" stroke-width="0.35" font-family="'Liberation Serif','Noto Serif CJK SC',serif" font-size="32">
    <text x="345" y="568" textLength="126" lengthAdjust="spacingAndGlyphs">双击文件</text>
    <text x="1010" y="465" textLength="222" lengthAdjust="spacingAndGlyphs">换成自己的域名</text>
    <text x="804" y="682" textLength="254" lengthAdjust="spacingAndGlyphs">剩余文件同样操作</text>
  </g>
</svg>

</body>
</html>
